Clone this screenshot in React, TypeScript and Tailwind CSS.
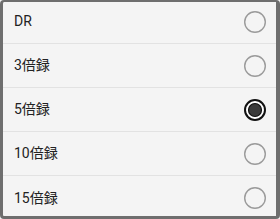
import React from 'react';

const options = ['DR', '3倍録', '5倍録', '10倍録', '15倍録'];

const Radio: React.FC<{ checked: boolean }> = ({ checked }) => (
  <svg width="24" height="24" viewBox="0 0 24 24">
    {checked ? (
      <>
        <circle cx="12" cy="12" r="10" fill="#ffffff" stroke="#111111" strokeWidth="2" />
        <circle cx="12" cy="12" r="6.5" fill="#3a3a3a" stroke="#111111" strokeWidth="1.2" />
      </>
    ) : (
      <circle cx="12" cy="12" r="10.3" fill="none" stroke="#9a9a9a" strokeWidth="1.4" />
    )}
  </svg>
);

export default function App() {
  const selected = 2;
  return (
    <div
      className="relative w-[280px] h-[219px] overflow-hidden bg-[#f4f4f4]"
      style={{ fontFamily: 'Roboto, "Noto Sans CJK JP", sans-serif' }}
    >
      <div className="flex flex-col">
        {options.map((label, i) => (
          <div
            key={label}
            className={`flex items-center justify-between h-[44px] pl-[14px] pr-[13px] ${
              i < options.length - 1 ? 'border-b border-[#e2e2e2]' : ''
            }`}
          >
            <span className="text-[14px] text-[#222222]">{label}</span>
            <Radio checked={i === selected} />
          </div>
        ))}
      </div>
      <div className="absolute inset-0 pointer-events-none rounded-[4px] border-t-2 border-l-[3px] border-r-[4px] border-b-[3px] border-[#6e6e6e]" />
    </div>
  );
}
